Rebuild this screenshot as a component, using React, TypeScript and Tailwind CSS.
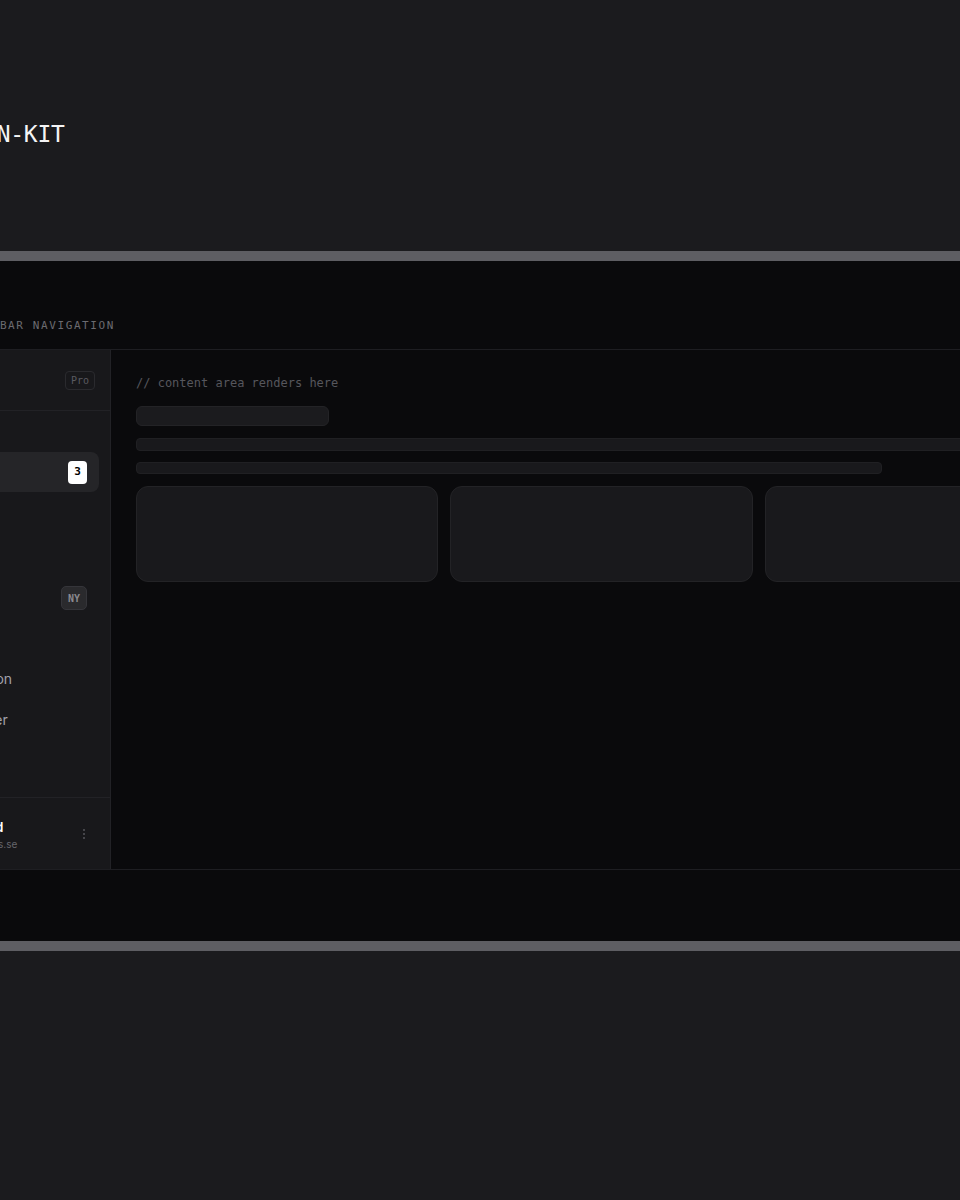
import React from "react";

const mono = { fontFamily: '"DejaVu Sans Mono", "Liberation Mono", monospace' };
const sans = { fontFamily: 'Inter, "Noto Sans", sans-serif' };

function NavItem({ label, active, badge, badgeKind }: { label: string; active?: boolean; badge?: string; badgeKind?: "white" | "dark" }) {
  return (
    <div className={`flex h-10 items-center gap-3 rounded-lg px-3 ${active ? "bg-[#252528] text-white" : "text-[#a1a1aa]"}`}>
      <span className="h-4 w-4 rounded-sm border border-[#3f3f46]" />
      <span className="flex-1 text-[14px]" style={sans}>{label}</span>
      {badge && badgeKind === "white" && (
        <span className="flex h-[23px] w-[19px] items-center justify-center rounded-[4px] bg-white text-[11px] font-bold text-black" style={mono}>{badge}</span>
      )}
      {badge && badgeKind === "dark" && (
        <span className="flex h-[24px] w-[26px] items-center justify-center rounded-[5px] border border-[#35353a] bg-[#2a2a2d] text-[10px] font-bold text-[#8a8a90]" style={mono}>{badge}</span>
      )}
    </div>
  );
}

export default function App() {
  return (
    <div className="w-[960px] overflow-hidden bg-[#1b1b1e] min-h-[1200px]">
      <div className="ml-[-130px] w-[1300px]">
        <div className="flex h-[251px] items-center pl-[59px] pt-[18px]">
          <span className="text-[23px] leading-none tracking-[-0.3px] text-[#f4f4f5]" style={mono}>DESIGN-KIT</span>
        </div>
        <div className="border-y-[10px] border-[#5e5e63] bg-[#0a0a0c]">
          <div className="flex h-[89px] items-end border-b border-[#1e1e22] pb-[15px] pl-[97px]">
            <span className="text-[11px] leading-4 tracking-[1.6px] text-[#6b6b70]" style={mono}>SIDEBAR NAVIGATION</span>
          </div>
          <div className="flex border-b border-[#1e1e22]">
            <aside className="flex w-[241px] flex-col border-r border-[#222226] bg-[#18181b]">
              <div className="flex h-[61px] items-center justify-between border-b border-[#222226] px-[15px]">
                <span className="text-[14px] font-semibold text-white" style={sans}>Acme</span>
                <span className="rounded-[4px] border border-[#2a2a2e] px-[5px] py-[2px] text-[10px] leading-[13px] text-[#5a5a60]" style={mono}>Pro</span>
              </div>
              <div className="flex flex-col pl-3 pr-[11px] pt-[41px]">
                <div className="flex flex-col gap-[2px]">
                  <NavItem label="Dashboard" active badge="3" badgeKind="white" />
                  <NavItem label="Projects" />
                  <NavItem label="Analytics" />
                  <NavItem label="Create new" badge="NY" badgeKind="dark" />
                </div>
                <div className="mt-[40px] flex flex-col gap-[1px]">
                  <NavItem label="Configuration" />
                  <NavItem label="File Manager" />
                </div>
              </div>
              <div className="mt-auto flex h-[72px] items-center gap-[9px] border-t border-[#222226] px-4 pt-[1px]">
                <span className="h-8 w-8 rounded-full bg-[#2a2a2d]" />
                <div className="flex flex-1 flex-col">
                  <span className="text-[13px] font-semibold leading-4 text-white" style={sans}>Maja Eklund</span>
                  <span className="mt-[3px] text-[10px] leading-3 text-[#66666c]" style={sans}>anna@lindgrens.se</span>
                </div>
                <span className="flex flex-col items-center gap-[2px] pr-[9px]">
                  <span className="h-[2px] w-[2px] rounded-full bg-[#55555b]" />
                  <span className="h-[2px] w-[2px] rounded-full bg-[#55555b]" />
                  <span className="h-[2px] w-[2px] rounded-full bg-[#55555b]" />
                </span>
              </div>
            </aside>
            <main className="h-[519px] w-[980px] pl-[25px] pr-6 pt-[25px]">
              <div className="text-[12px] leading-4 text-[#56565c]" style={mono}>// content area renders here</div>
              <div className="mt-[15px] h-5 w-[193px] rounded-md border border-[#232326] bg-[#1b1b1e]" />
              <div className="mt-3 h-[13px] w-[931px] rounded-[4px] border border-[#202023] bg-[#19191c]" />
              <div className="mt-[11px] h-3 w-[746px] rounded-[4px] border border-[#202023] bg-[#19191c]" />
              <div className="mt-3 grid w-[931px] grid-cols-3 gap-3">
                <div className="h-24 rounded-xl border border-[#232326] bg-[#19191c]" />
                <div className="h-24 rounded-xl border border-[#232326] bg-[#19191c]" />
                <div className="h-24 rounded-xl border border-[#232326] bg-[#19191c]" />
              </div>
            </main>
          </div>
          <div className="h-[71px]" />
        </div>
      </div>
    </div>
  );
}
